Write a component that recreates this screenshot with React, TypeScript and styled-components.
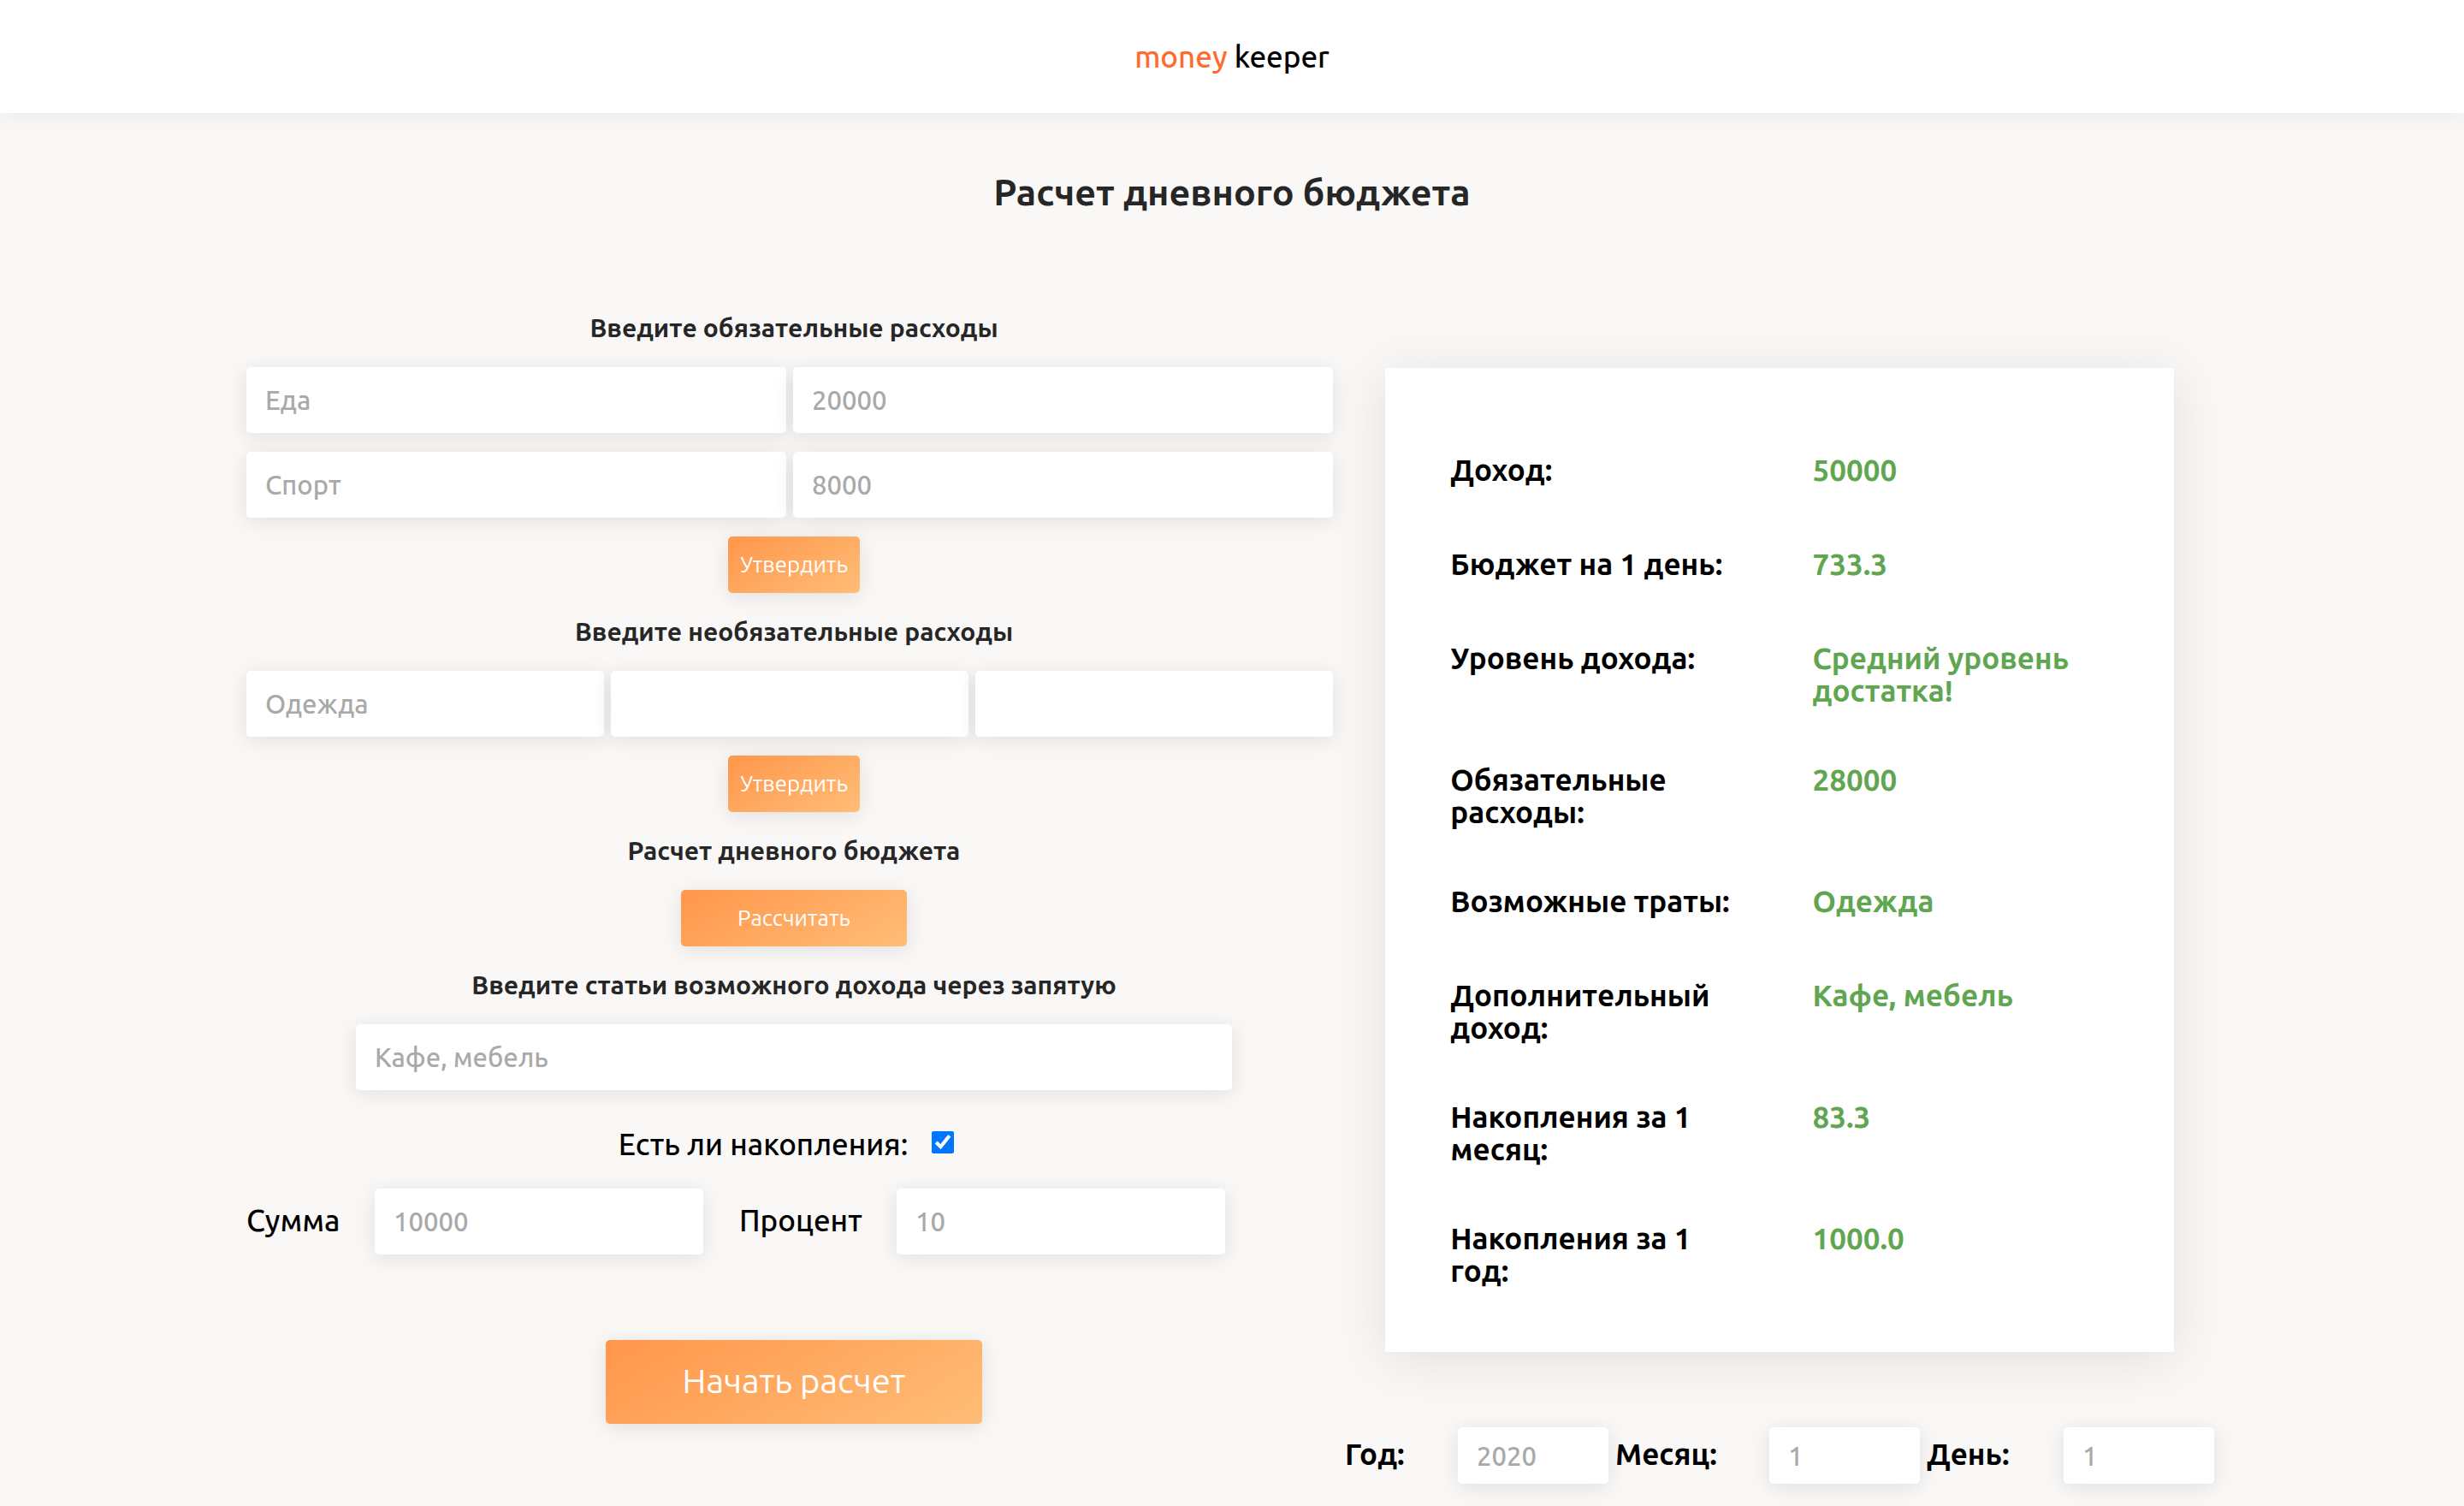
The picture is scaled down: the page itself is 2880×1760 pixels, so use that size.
import React from "react";
import styled, { createGlobalStyle } from "styled-components";

const GlobalStyle = createGlobalStyle`
  *, *::before, *::after { box-sizing: border-box; }
  body {
    margin: 0;
    background: #f9f8f6;
    color: #000;
    font-family: Ubuntu, "Noto Sans", sans-serif;
    font-size: 35px;
    font-weight: 500;
  }
  input, button { font-family: inherit; }
`;

const Header = styled.header`
  display: flex;
  align-items: center;
  justify-content: center;
  height: 132px;
  background: #fff;
  box-shadow: 0 0 28px rgba(0, 0, 0, 0.08);
`;

const Logo = styled.a`
  padding-bottom: 1px;
  color: #000;
  line-height: 40px;
  text-decoration: none;
`;

const LogoAccent = styled.span`
  color: #ff6a2f;
`;

const Title = styled.h1`
  margin: 66px 0 0;
  color: #262626;
  font-size: 43px;
  font-weight: 700;
  line-height: 52px;
  text-align: center;
`;

const Columns = styled.main`
  display: grid;
  grid-template-columns: minmax(0, 5fr) minmax(0, 4fr);
  width: 80%;
  margin: 110px auto 0;
`;

const Form = styled.form`
  display: flex;
  flex-direction: column;
  align-items: center;
`;

const SectionTitle = styled.h2`
  margin: 0;
  padding-bottom: 1px;
  color: #262626;
  font-size: 30px;
  font-weight: 700;
  line-height: 46px;
  text-align: center;
`;

const Fields = styled.div`
  display: flex;
  gap: 8px;
  width: 100%;
  margin-top: 22px;
  padding-right: 10px;
`;

const Field = styled.input<{ $width?: string; $small?: boolean }>`
  flex: ${(p) => (p.$width ? "none" : "1 1 0")};
  width: ${(p) => p.$width ?? "auto"};
  min-width: 0;
  height: ${(p) => (p.$small ? 66 : 77)}px;
  padding: 0 22px;
  border: 0;
  border-radius: 5px;
  background: #fff;
  box-shadow: 0 4px 24px rgba(0, 0, 0, 0.1);
  color: #262626;
  font-size: 31px;
  font-weight: 500;
  &::placeholder { color: #a9a9a9; opacity: 1; }
`;

const Button = styled.button<{ $wide?: boolean }>`
  width: ${(p) => (p.$wide ? 264 : 154)}px;
  height: 66px;
  margin: 22px 0;
  padding: 0 0 2px;
  border: 0;
  border-radius: 5px;
  background: linear-gradient(150deg, #ff964b, #ffbd77);
  box-shadow: 0 4px 24px rgba(0, 0, 0, 0.1);
  color: #fff;
  font-size: 26px;
  font-weight: 400;
`;

const StartButton = styled(Button)`
  width: 440px;
  height: 98px;
  margin: 100px 0 96px;
  padding-bottom: 4px;
  font-size: 40px;
`;

const IncomeField = styled(Field)`
  margin-top: 22px;
`;

const SavingsToggle = styled.div`
  display: flex;
  align-items: center;
  gap: 28px;
  margin: 38px 0 27px;
  padding-right: 18px;
  line-height: 50px;
`;

const Checkbox = styled.input`
  width: 26px;
  height: 26px;
  margin: 0 0 4px;
  accent-color: #0075ff;
`;

const RowLabel = styled.label<{ $strong?: boolean }>`
  padding-bottom: 4px;
  font-weight: ${(p) => (p.$strong ? 700 : 500)};
`;

const SavingsRow = styled.div`
  display: grid;
  grid-template-columns: 108px 30% 142px 30%;
  align-items: center;
  gap: 42px;
  width: 100%;
`;

const Side = styled.section`
  display: flex;
  flex-direction: column;
  align-items: center;
`;

const Card = styled.dl`
  display: flex;
  flex-direction: column;
  gap: 66px;
  width: 90%;
  margin: 70px 0 0;
  padding: 100px 76px 76px;
  background: #fff;
  box-shadow: 0 8px 56px rgba(0, 0, 0, 0.1);
`;

const Result = styled.div`
  display: grid;
  grid-template-columns: 11fr 9fr;
  min-height: 44px;
  font-weight: 700;
  line-height: 38px;
`;

const Term = styled.dt`
  padding-right: 76px;
`;

const Value = styled.dd`
  margin: 0;
  color: #60a651;
`;

const DateRow = styled.div`
  display: grid;
  grid-template-columns: 124px 176px 172px 176px 152px 176px;
  align-items: center;
  gap: 8px;
  margin-top: 88px;
`;

const results = [
  ["Доход:", "50000"],
  ["Бюджет на 1 день:", "733.3"],
  ["Уровень дохода:", "Средний уровень достатка!"],
  ["Обязательные расходы:", "28000"],
  ["Возможные траты:", "Одежда"],
  ["Дополнительный доход:", "Кафе, мебель"],
  ["Накопления за 1 месяц:", "83.3"],
  ["Накопления за 1 год:", "1000.0"],
];

const dates = [
  { id: "year", label: "Год:", hint: "2020" },
  { id: "month", label: "Месяц:", hint: "1" },
  { id: "day", label: "День:", hint: "1" },
];

export default function App() {
  return (
    <>
      <GlobalStyle />
      <Header>
        <Logo href="#">
          <LogoAccent>money</LogoAccent> keeper
        </Logo>
      </Header>
      <Title>Расчет дневного бюджета</Title>
      <Columns>
        <Form onSubmit={(e) => e.preventDefault()}>
          <SectionTitle>Введите обязательные расходы</SectionTitle>
          <Fields>
            <Field aria-label="Статья расходов 1" placeholder="Еда" />
            <Field aria-label="Сумма расходов 1" placeholder="20000" />
          </Fields>
          <Fields>
            <Field aria-label="Статья расходов 2" placeholder="Спорт" />
            <Field aria-label="Сумма расходов 2" placeholder="8000" />
          </Fields>
          <Button type="button">Утвердить</Button>

          <SectionTitle>Введите необязательные расходы</SectionTitle>
          <Fields>
            <Field aria-label="Необязательный расход 1" placeholder="Одежда" />
            <Field aria-label="Необязательный расход 2" />
            <Field aria-label="Необязательный расход 3" />
          </Fields>
          <Button type="button">Утвердить</Button>

          <SectionTitle>Расчет дневного бюджета</SectionTitle>
          <Button type="button" $wide>Рассчитать</Button>

          <SectionTitle as="label" htmlFor="income">
            Введите статьи возможного дохода через запятую
          </SectionTitle>
          <IncomeField id="income" $width="80%" placeholder="Кафе, мебель" />

          <SavingsToggle>
            <label htmlFor="savings">Есть ли накопления:</label>
            <Checkbox id="savings" type="checkbox" defaultChecked />
          </SavingsToggle>
          <SavingsRow>
            <RowLabel htmlFor="sum">Сумма</RowLabel>
            <Field id="sum" $width="100%" placeholder="10000" />
            <RowLabel htmlFor="percent">Процент</RowLabel>
            <Field id="percent" $width="100%" placeholder="10" />
          </SavingsRow>

          <StartButton type="submit">Начать расчет</StartButton>
        </Form>

        <Side>
          <Card>
            {results.map(([term, value]) => (
              <Result key={term}>
                <Term>{term}</Term>
                <Value>{value}</Value>
              </Result>
            ))}
          </Card>
          <DateRow>
            {dates.map((d) => (
              <React.Fragment key={d.id}>
                <RowLabel htmlFor={d.id} $strong>{d.label}</RowLabel>
                <Field id={d.id} $width="100%" $small placeholder={d.hint} />
              </React.Fragment>
            ))}
          </DateRow>
        </Side>
      </Columns>
    </>
  );
}
